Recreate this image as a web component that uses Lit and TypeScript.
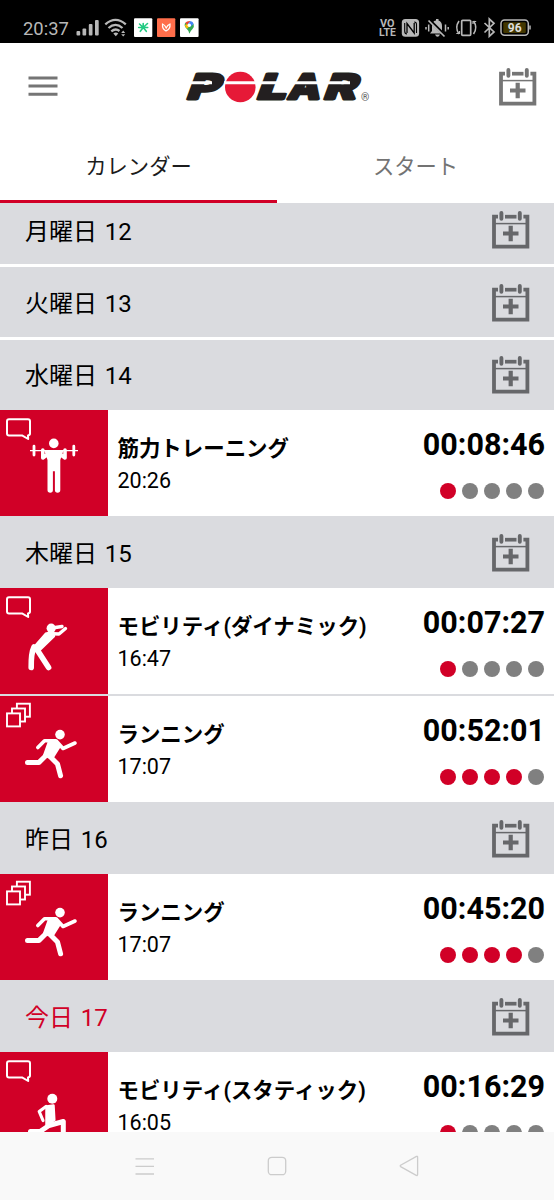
import { LitElement, html, svg, css, nothing } from "lit";
import { customElement, property } from "lit/decorators.js";

type Sport = "strength" | "dynamic" | "running" | "static";
interface Session { sport: Sport; badge: "note" | "stack"; title: string; time: string; duration: string; load: number; }
interface Day { label: string; kind?: string; sessions: Session[]; }

const DAYS: Day[] = [
  { label: "月曜日 12", kind: "first", sessions: [] },
  { label: "火曜日 13", kind: "empty", sessions: [] },
  { label: "水曜日 14", kind: "third", sessions: [
    { sport: "strength", badge: "note", title: "筋力トレーニング", time: "20:26", duration: "00:08:46", load: 1 },
  ] },
  { label: "木曜日 15", sessions: [
    { sport: "dynamic", badge: "note", title: "モビリティ(ダイナミック)", time: "16:47", duration: "00:07:27", load: 1 },
    { sport: "running", badge: "stack", title: "ランニング", time: "17:07", duration: "00:52:01", load: 4 },
  ] },
  { label: "昨日 16", sessions: [
    { sport: "running", badge: "stack", title: "ランニング", time: "17:07", duration: "00:45:20", load: 4 },
  ] },
  { label: "今日 17", kind: "today", sessions: [
    { sport: "static", badge: "note", title: "モビリティ(スタティック)", time: "16:05", duration: "00:16:29", load: 1 },
  ] },
];

// All sport figures share the 108x106 tile coordinate system.
const FIGURES = {
  strength: svg`
    <circle cx="53.8" cy="33.4" r="4.8"/>
    <path d="M30 40.6H78" stroke="#fff" stroke-width="1.300"/>
    <path d="M34 36.200V45M73.800 36.200V45" stroke="#fff" stroke-width="2.800" stroke-linecap="round"/>
    <path d="M42.800 40V48L48 44M65 40V48L59.800 44" fill="none" stroke="#fff" stroke-width="3.600" stroke-linecap="round" stroke-linejoin="round"/>
    <path d="M44.500 41H63.300L60.300 50V80Q60.300 82.800 57.600 82.800Q54.900 82.800 54.900 80V61.300H52.900V80Q52.900 82.800 50.200 82.800Q47.500 82.800 47.500 80V50Z"/>`,
  dynamic: svg`
    <circle cx="51.200" cy="40.200" r="4.600"/>
    <path d="M32.500 61L46 45.500L54 48L39 62.500Z" stroke="#fff" stroke-width="2.500" stroke-linejoin="round"/>
    <path d="M34 59Q31 65 31.200 79.500M36 60L48.600 79.500" fill="none" stroke="#fff" stroke-width="5.600" stroke-linecap="round" stroke-linejoin="round"/>
    <path d="M48 45.500L59 46L65.500 40.500M52 40L62 38.500" fill="none" stroke="#fff" stroke-width="3.400" stroke-linecap="round" stroke-linejoin="round"/>`,
  running: svg`
    <circle cx="60" cy="38.600" r="4.800"/>
    <path d="M37.800 51.500L44.500 44.800H56L63 52.500L75 47" fill="none" stroke="#fff" stroke-width="3.600" stroke-linecap="round" stroke-linejoin="round"/>
    <path d="M49 45H56L59.500 51L52 63L44 59Z" stroke="#fff" stroke-width="2" stroke-linejoin="round"/>
    <path d="M46.500 59L39 66.400H27.500M51 61.500L57.500 68L60.600 79.800" fill="none" stroke="#fff" stroke-width="5" stroke-linecap="round" stroke-linejoin="round"/>`,
  static: svg`
    <circle cx="52.300" cy="46.800" r="5"/>
    <path d="M46.500 54.500L53.500 53.500L54.300 68L46.500 73Z" stroke="#fff" stroke-width="2.500" stroke-linejoin="round"/>
    <path d="M46 54.500L39.200 59.500L43 68.500" fill="none" stroke="#fff" stroke-width="3.200" stroke-linecap="round" stroke-linejoin="round"/>
    <path d="M30.500 79.500H40L49 73.500L63.300 69.500V95" fill="none" stroke="#fff" stroke-width="5" stroke-linecap="round" stroke-linejoin="round"/>`,
};

const BADGES = {
  note: svg`<path d="M9 9.200H28Q30 9.200 30 11.200V23.500Q30 25.200 28 25.400L28.200 29L22 25.400H9Q7 25.400 7 23.500V11.200Q7 9.200 9 9.200Z" fill="none" stroke="#fff" stroke-width="2" stroke-linejoin="round"/>`,
  stack: svg`<g fill="#d10027" stroke="#fff" stroke-width="1.900"><rect x="16.900" y="7.700" width="13" height="13"/><rect x="12" y="12.500" width="13" height="13"/><rect x="7" y="17.400" width="13" height="13"/></g>`,
};

const calendarIcon = html`
  <svg class="calendar" width="38" height="38" viewBox="0 0 38 38" fill="none" stroke="currentColor">
    <path d="M6 5.700H2V35.700H35.400V5.700H31.400" stroke-width="3.800"/>
    <path d="M13 5.700H24.500" stroke-width="3.700"/>
    <path d="M3 12.600H35" stroke-width="1.500"/>
    <path d="M9.400 2V7.800M27.800 2V7.800" stroke-width="3.900" stroke-linecap="round"/>
    <path d="M11 22.500H26.500M18.700 14.800V30.200" stroke-width="4.200"/>
  </svg>`;

@customElement("session-row")
class SessionRow extends LitElement {
  @property({ attribute: false }) session!: Session;
  static styles = css`
    :host { display: flex; height: 106px; flex: none; background: #fff; }
    .tile { flex: none; width: 108px; height: 106px; background: #d10027; display: block; }
    .body { flex: 1; display: flex; flex-direction: column; padding: 22px 0 0 9.500px; white-space: nowrap; }
    .title { font-weight: 700; font-size: 21.450px; line-height: 34px; }
    .time { font-size: 21.500px; line-height: 30px; }
    .side { display: flex; flex-direction: column; align-items: flex-end; padding: 17px 9px 0 0; }
    .duration { font-weight: 700; font-size: 30.500px; line-height: 36px; }
    .dots { display: flex; gap: 6.100px; padding: 20px .6px 0 0; }
    .dot { width: 16px; height: 16px; border-radius: 50%; background: #808080; }
    .filled { background: #d10027; }
  `;
  render() {
    const s = this.session;
    return html`
      <svg class="tile" viewBox="0 0 108 106" fill="#fff">${BADGES[s.badge]}${FIGURES[s.sport]}</svg>
      <div class="body"><div class="title">${s.title}</div><div class="time">${s.time}</div></div>
      <div class="side">
        <div class="duration">${s.duration}</div>
        <div class="dots">${[0, 1, 2, 3, 4].map((i) => html`<span class="dot ${i < s.load ? "filled" : ""}"></span>`)}</div>
      </div>`;
  }
}

@customElement("status-bar")
class StatusBar extends LitElement {
  static styles = css`
    :host { display: flex; flex: none; height: 43px; background: #000; color: #b8b8b8; justify-content: space-between; padding: 0 23px; }
    .group { display: flex; align-items: center; padding-top: 13px; height: 30px; }
    .clock { font-size: 18.400px; width: 53px; line-height: 30px; padding-top: 2px; }
    svg { display: block; flex: none; }
  `;
  render() {
    return html`
      <div class="group">
        <span class="clock">20:37</span>
        <svg width="123" height="30" viewBox="76 13 123 30">
          <g fill="#b8b8b8">
            <rect x="76.500" y="31" width="3.700" height="4.500" rx="1"/><rect x="82.500" y="28.500" width="3.700" height="7" rx="1"/>
            <rect x="88.800" y="24" width="3.700" height="11.500" rx="1"/><rect x="95" y="20" width="3.700" height="15.500" rx="1"/>
            <path d="M113.300 33.500L115.800 36.200L118.300 33.500Q115.800 31.600 113.300 33.500ZM121.200 33L123.200 30.600L125.200 33ZM121.200 34.300H125.200L123.200 36.500Z"/>
          </g>
          <g fill="none" stroke="#b8b8b8" stroke-width="2.300"><path d="M105.300 24.300Q115.500 15.500 125.800 24.300"/><path d="M108.500 28Q115.500 21.800 122.500 28"/><path d="M111.300 31.400Q115.500 27.800 119.500 31"/></g>
          <rect x="134" y="18.300" width="18.300" height="18.600" rx="1" fill="#fff"/>
          <path d="M143.200 27.500L139.500 24M143.200 27.500L147.500 23.500M143.200 27.500H138.700M143.200 27.500H147.700M143.200 27.500L140.300 31.300M143.200 27.500L146.300 31.300M143.200 23.500V27.500" stroke="#20ca82" stroke-width="1.600" stroke-linecap="round"/>
          <rect x="157" y="18.300" width="18.300" height="18.600" rx="1" fill="#ff6e4b"/>
          <path d="M162.500 24Q162 29 166 31Q170.500 29 170 24Q167.500 25 166.200 28Q165 25 162.500 24Z" fill="none" stroke="#fff" stroke-width="1.200"/>
          <rect x="180" y="18.300" width="18.600" height="18.600" rx="1" fill="#fff"/>
          <path d="M189.300 33.800Q188.800 30.500 186 28Q183.700 25.500 185.300 22.800L189.300 25.500L193.700 24Q194.500 26.500 192.500 29Q190 31.500 189.300 33.800Z" fill="#34a853"/>
          <path d="M185.300 22.800Q187 20.700 190.500 21L187 25Z" fill="#ea4335"/><path d="M190.500 21Q193 21.700 193.700 24L190 27L187 25Z" fill="#4285f4"/><path d="M184.800 25Q185 27 187 28.800L190 25.800L187.500 24Z" fill="#fbbc04"/>
          <circle cx="189.300" cy="25.300" r="1.700" fill="#fff"/>
        </svg>
      </div>
      <div class="group">
        <svg width="153" height="30" viewBox="378 13 153 30" fill="none" stroke="#b8b8b8">
          <g fill="#b8b8b8" stroke="none" font-weight="700" font-size="10"><text x="380" y="26.700" textLength="14.500" lengthAdjust="spacingAndGlyphs">VO</text><text x="379" y="36.200" textLength="16.800" lengthAdjust="spacingAndGlyphs">LTE</text></g>
          <rect x="401.800" y="19" width="17.300" height="17.800" rx="3.500" fill="#b8b8b8" stroke="none"/>
          <path d="M407 33V23.500L414.200 33V23" stroke="#000" stroke-width="1.300"/><path d="M404.700 23V31Q404.700 34 407 34M416.500 33V24.500Q416.500 22 414.200 22" stroke="#000" stroke-width="1.100"/>
          <path d="M430 33.500L432 31V26Q432 21 436 20.500V19H438.500V20.500Q442 21.500 442 26V31L444.500 33.500ZM435 34.500H440Q439 36.800 437.500 36.800Q436 36.800 435 34.500Z" fill="#b8b8b8" stroke="none"/>
          <path d="M429 19.500L445.500 36" stroke="#000" stroke-width="3"/><path d="M428.500 20.500L444.500 36.500" stroke-width="1.700"/>
          <path d="M426 27V29.500M428.700 24.500V31.500M445.500 24.500V31.500M448.200 27V29.500" stroke-width="1.500"/>
          <rect x="461.700" y="20.300" width="9" height="15" rx="1" stroke-width="1.700"/>
          <path d="M459 21Q454.500 27.500 459 34M473.500 21Q478 27.500 473.500 34" stroke-width="1.600"/><path d="M456.300 33.500H459.500V31M476.200 21.500H473V24" stroke-width="1.200"/>
          <path d="M484.500 23L494 32L489.300 36.300V19L494 23.300L484.500 32.500" stroke-width="1.700"/>
          <rect x="501" y="20" width="27.300" height="15.300" rx="3.500" stroke-width="1.500"/><path d="M530 25.500V29.500" stroke-width="1.500"/>
          <rect x="503.300" y="22.300" width="22.500" height="10.700" rx="1" fill="#423700" stroke="none"/>
          <text x="507.700" y="32" fill="#ddd" stroke="none" font-size="12" font-weight="700" textLength="14">96</text>
        </svg>
      </div>`;
  }
}

@customElement("app-root")
class AppRoot extends LitElement {
  static styles = css`
    :host { display: flex; flex-direction: column; width: 554px; height: 1200px; overflow: hidden; background: #fff; color: #000; font-family: Roboto, "Noto Sans CJK JP", sans-serif; }
    svg { display: block; flex: none; }
    .bar { display: flex; flex: none; height: 87px; align-items: center; padding: 0 17.500px 0 28px; box-sizing: border-box; color: #757575; }
    .logo { margin-left: 126px; margin-right: auto; overflow: visible; }
    .tabs { display: grid; grid-template-columns: 1fr 1fr; flex: none; height: 73px; }
    .tab { text-align: center; font-size: 21.300px; line-height: 74px; height: 70px; color: #737373; border-bottom: 3px solid transparent; }
    .selected { color: #1c1c1c; border-color: #d10027; }
    .list { flex: 1; min-height: 0; overflow: hidden; display: flex; flex-direction: column; }
    .day { flex: none; display: flex; align-items: center; justify-content: space-between; box-sizing: border-box; height: 72px; padding: 2px 24px 0 25px; background: #dadbdf; font-size: 24px; line-height: 36px; }
    .label { padding-top: 1px; word-spacing: 1.700px; }
    .first { height: 60.500px; padding-top: 0; padding-bottom: 6px; }
    .first .label, .empty .label { padding-top: 3px; }
    .empty { height: 70px; margin: 3px 0; }
    .third { height: 70.500px; padding-top: 1px; }
    .today { color: #d10027; }
    .calendar { color: #66676a; }
    .bar .calendar { color: #757575; }
    .divider { flex: none; height: 2px; background: #dadbdf; }
    .nav { flex: none; height: 68px; background: #f9f9f9; display: flex; justify-content: space-between; align-items: center; padding: 0 135px; }
  `;
  render() {
    return html`
      <status-bar></status-bar>
      <header class="bar">
        <svg width="30" height="22" viewBox="0 0 30 22"><path d="M.5 1.900H29.500M.5 10.100H29.500M.5 18.300H29.500" stroke="#757575" stroke-width="3"/></svg>
        <svg class="logo" width="186" height="34" viewBox="184 69 186 34" font-family="Inter, Roboto, sans-serif" font-weight="800">
          <g fill="#231f20" stroke="#231f20" stroke-width="3" stroke-linejoin="round" font-size="34.500">
            <text transform="translate(185.500 98.300) skewX(-20)" textLength="32" lengthAdjust="spacingAndGlyphs">P</text>
            <text transform="translate(255.500 98.300) skewX(-20)" textLength="29" lengthAdjust="spacingAndGlyphs">L</text>
            <text transform="translate(287 98.300) skewX(-12)" textLength="32" lengthAdjust="spacingAndGlyphs">A</text>
            <text transform="translate(322.500 98.300) skewX(-20)" textLength="32" lengthAdjust="spacingAndGlyphs">R</text>
          </g>
          <circle cx="240.300" cy="86" r="15.300" fill="#e61937"/>
          <path d="M186 81.700H212M224 81.700H320.500M326 81.700H350" stroke="#fff" stroke-width="3"/>
          <text x="361" y="100.300" font-family="Roboto, sans-serif" font-size="10.500" font-weight="400" fill="#555">®</text>
        </svg>
        ${calendarIcon}
      </header>
      <nav class="tabs"><div class="tab selected">カレンダー</div><div class="tab">スタート</div></nav>
      <main class="list">
        ${DAYS.map((d) => html`
          <div class="day ${d.kind ?? ""}"><span class="label">${d.label}</span>${calendarIcon}</div>
          ${d.sessions.map((s, i) => html`${i ? html`<div class="divider"></div>` : nothing}<session-row .session=${s}></session-row>`)}
        `)}
      </main>
      <footer class="nav">
        <svg width="20" height="20" viewBox="0 0 20 20"><path d="M.5 2.800H19M.5 10.300H19M.5 18H19" stroke="#ccc" stroke-width="1.300"/></svg>
        <svg width="20" height="20" viewBox="0 0 20 20"><rect x="1.300" y="1.300" width="17.400" height="17.400" rx="3.500" fill="none" stroke="#ccc" stroke-width="1.300"/></svg>
        <svg width="20" height="22" viewBox="0 0 20 22"><path d="M17.500 1.400L1.600 10.300Q.8 11 1.600 11.600L17.200 20.400Q18.600 20.800 18.600 19.500V2.200Q18.600 1 17.500 1.400Z" fill="none" stroke="#ccc" stroke-width="1.300"/></svg>
      </footer>`;
  }
}
